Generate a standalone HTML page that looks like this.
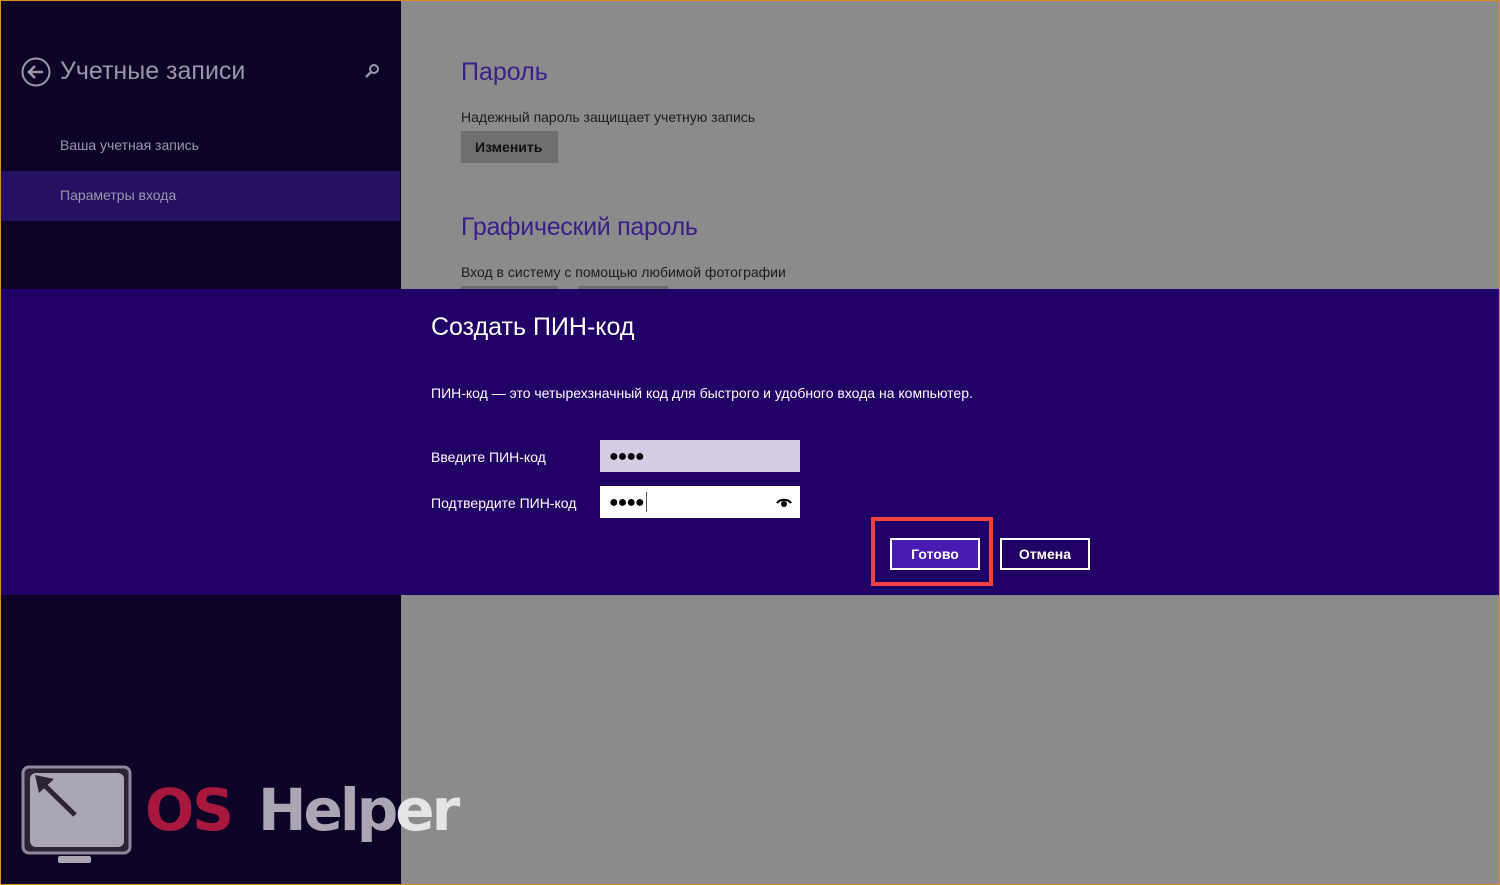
<!DOCTYPE html>
<html><head><meta charset="utf-8"><style>
*{margin:0;padding:0;box-sizing:border-box}
body{width:1500px;height:885px;position:relative;overflow:hidden;background:#8b8b8b;font-family:"Liberation Sans",sans-serif}
.a{position:absolute}
.left{left:0;top:0;width:401px;height:885px;background:#0c0327}
.t{white-space:nowrap}
</style></head><body>
<div class="a left"></div>
<div class="a" style="left:0;top:171px;width:400px;height:50px;background:#261063"></div>
<svg class="a" style="left:20px;top:56px" width="32" height="32" viewBox="0 0 32 32"><circle cx="16" cy="16" r="13.5" fill="none" stroke="#9a97a6" stroke-width="2"/><path d="M9 16H23M15 10L9 16L15 22" fill="none" stroke="#9a97a6" stroke-width="2.6"/></svg>
<div class="a t" style="left:60px;top:57px;font-size:25px;color:#9a97a6">Учетные записи</div>
<svg class="a" style="left:364px;top:63px" width="16" height="16" viewBox="0 0 16 16"><circle cx="10" cy="6" r="4" fill="none" stroke="#9a97a6" stroke-width="2"/><path d="M7 9L2 14" stroke="#9a97a6" stroke-width="2.4"/></svg>
<div class="a t" style="left:60px;top:137px;font-size:14px;color:#9a97a6">Ваша учетная запись</div>
<div class="a t" style="left:60px;top:187px;font-size:14px;color:#9a97a6">Параметры входа</div>

<div class="a t" style="left:461px;top:58px;font-size:25px;color:#3a1e8a">Пароль</div>
<div class="a t" style="left:461px;top:109px;font-size:14px;color:#1c1c1c">Надежный пароль защищает учетную запись</div>
<div class="a" style="left:461px;top:131px;width:97px;height:32px;background:#6e6e6e"></div>
<div class="a t" style="left:475px;top:139px;font-size:14px;color:#111;font-weight:bold">Изменить</div>
<div class="a t" style="left:461px;top:213px;font-size:25px;color:#3a1e8a;letter-spacing:-0.3px">Графический пароль</div>
<div class="a t" style="left:461px;top:264px;font-size:14px;color:#1c1c1c">Вход в систему с помощью любимой фотографии</div>
<div class="a" style="left:461px;top:286px;width:97px;height:4px;background:#6e6e6e"></div>
<div class="a" style="left:578px;top:286px;width:90px;height:4px;background:#6e6e6e"></div>

<div class="a" style="left:0;top:289px;width:1500px;height:306px;background:#200066"></div>
<div class="a t" style="left:431px;top:313px;font-size:25px;color:#fff">Создать ПИН-код</div>
<div class="a t" style="left:431px;top:385px;font-size:14px;color:#fff">ПИН-код — это четырехзначный код для быстрого и удобного входа на компьютер.</div>
<div class="a t" style="left:431px;top:449px;font-size:14px;color:#fff">Введите ПИН-код</div>
<div class="a t" style="left:431px;top:495px;font-size:14px;color:#fff">Подтвердите ПИН-код</div>
<div class="a" style="left:600px;top:440px;width:200px;height:32px;background:#d3cce2"></div>
<div class="a t" style="left:609px;top:448px;font-size:16px;color:#000;letter-spacing:-1px">●●●●</div>
<div class="a" style="left:600px;top:486px;width:200px;height:32px;background:#fff"></div>
<div class="a t" style="left:609px;top:494px;font-size:16px;color:#000;letter-spacing:-1px">●●●●</div>
<div class="a" style="left:646px;top:492px;width:1px;height:20px;background:#555"></div>
<svg class="a" style="left:775px;top:496px" width="18" height="14" viewBox="0 0 18 14"><path d="M2 7A8 6 0 0 1 16 7" fill="none" stroke="#000" stroke-width="2.2"/><circle cx="9" cy="8" r="3" fill="#000"/></svg>
<div class="a" style="left:871px;top:517px;width:122px;height:69px;border:4px solid #f0413f"></div>
<div class="a" style="left:890px;top:538px;width:90px;height:32px;background:#4a1bb3;border:2px solid #fff;color:#fff;font-size:14px;font-weight:bold;text-align:center;line-height:28px">Готово</div>
<div class="a" style="left:1000px;top:538px;width:90px;height:32px;background:#200066;border:2px solid #fff;color:#fff;font-size:14px;font-weight:bold;text-align:center;line-height:28px">Отмена</div>

<svg class="a" style="left:20px;top:765px" width="115" height="100" viewBox="0 0 115 100"><rect x="3" y="2" width="107" height="86" rx="6" fill="#2a2436" stroke="#8d899a" stroke-width="3"/><rect x="10" y="8" width="94" height="74" rx="6" fill="#aaa6b3"/><path d="M18 14L55 50" stroke="#2a2436" stroke-width="5"/><path d="M15 10L34 14L19 28Z" fill="#2a2436"/><rect x="38" y="91" width="33" height="7" rx="2" fill="#aaa6b3"/></svg>
<div class="a t" style="left:145px;top:776px;font-size:58px;font-weight:bold;color:#a8183c;font-family:'DejaVu Sans',sans-serif;letter-spacing:-2px">OS</div>
<div class="a t" style="left:258px;top:776px;font-size:58px;font-weight:bold;color:#aaa6b3;font-family:'DejaVu Sans',sans-serif;letter-spacing:-3px">Help<span style="color:#e5e5e8">er</span></div>
<div class="a" style="left:0;top:0;width:1500px;height:885px;border:1px solid #e08a1e;pointer-events:none"></div>
</body></html>
